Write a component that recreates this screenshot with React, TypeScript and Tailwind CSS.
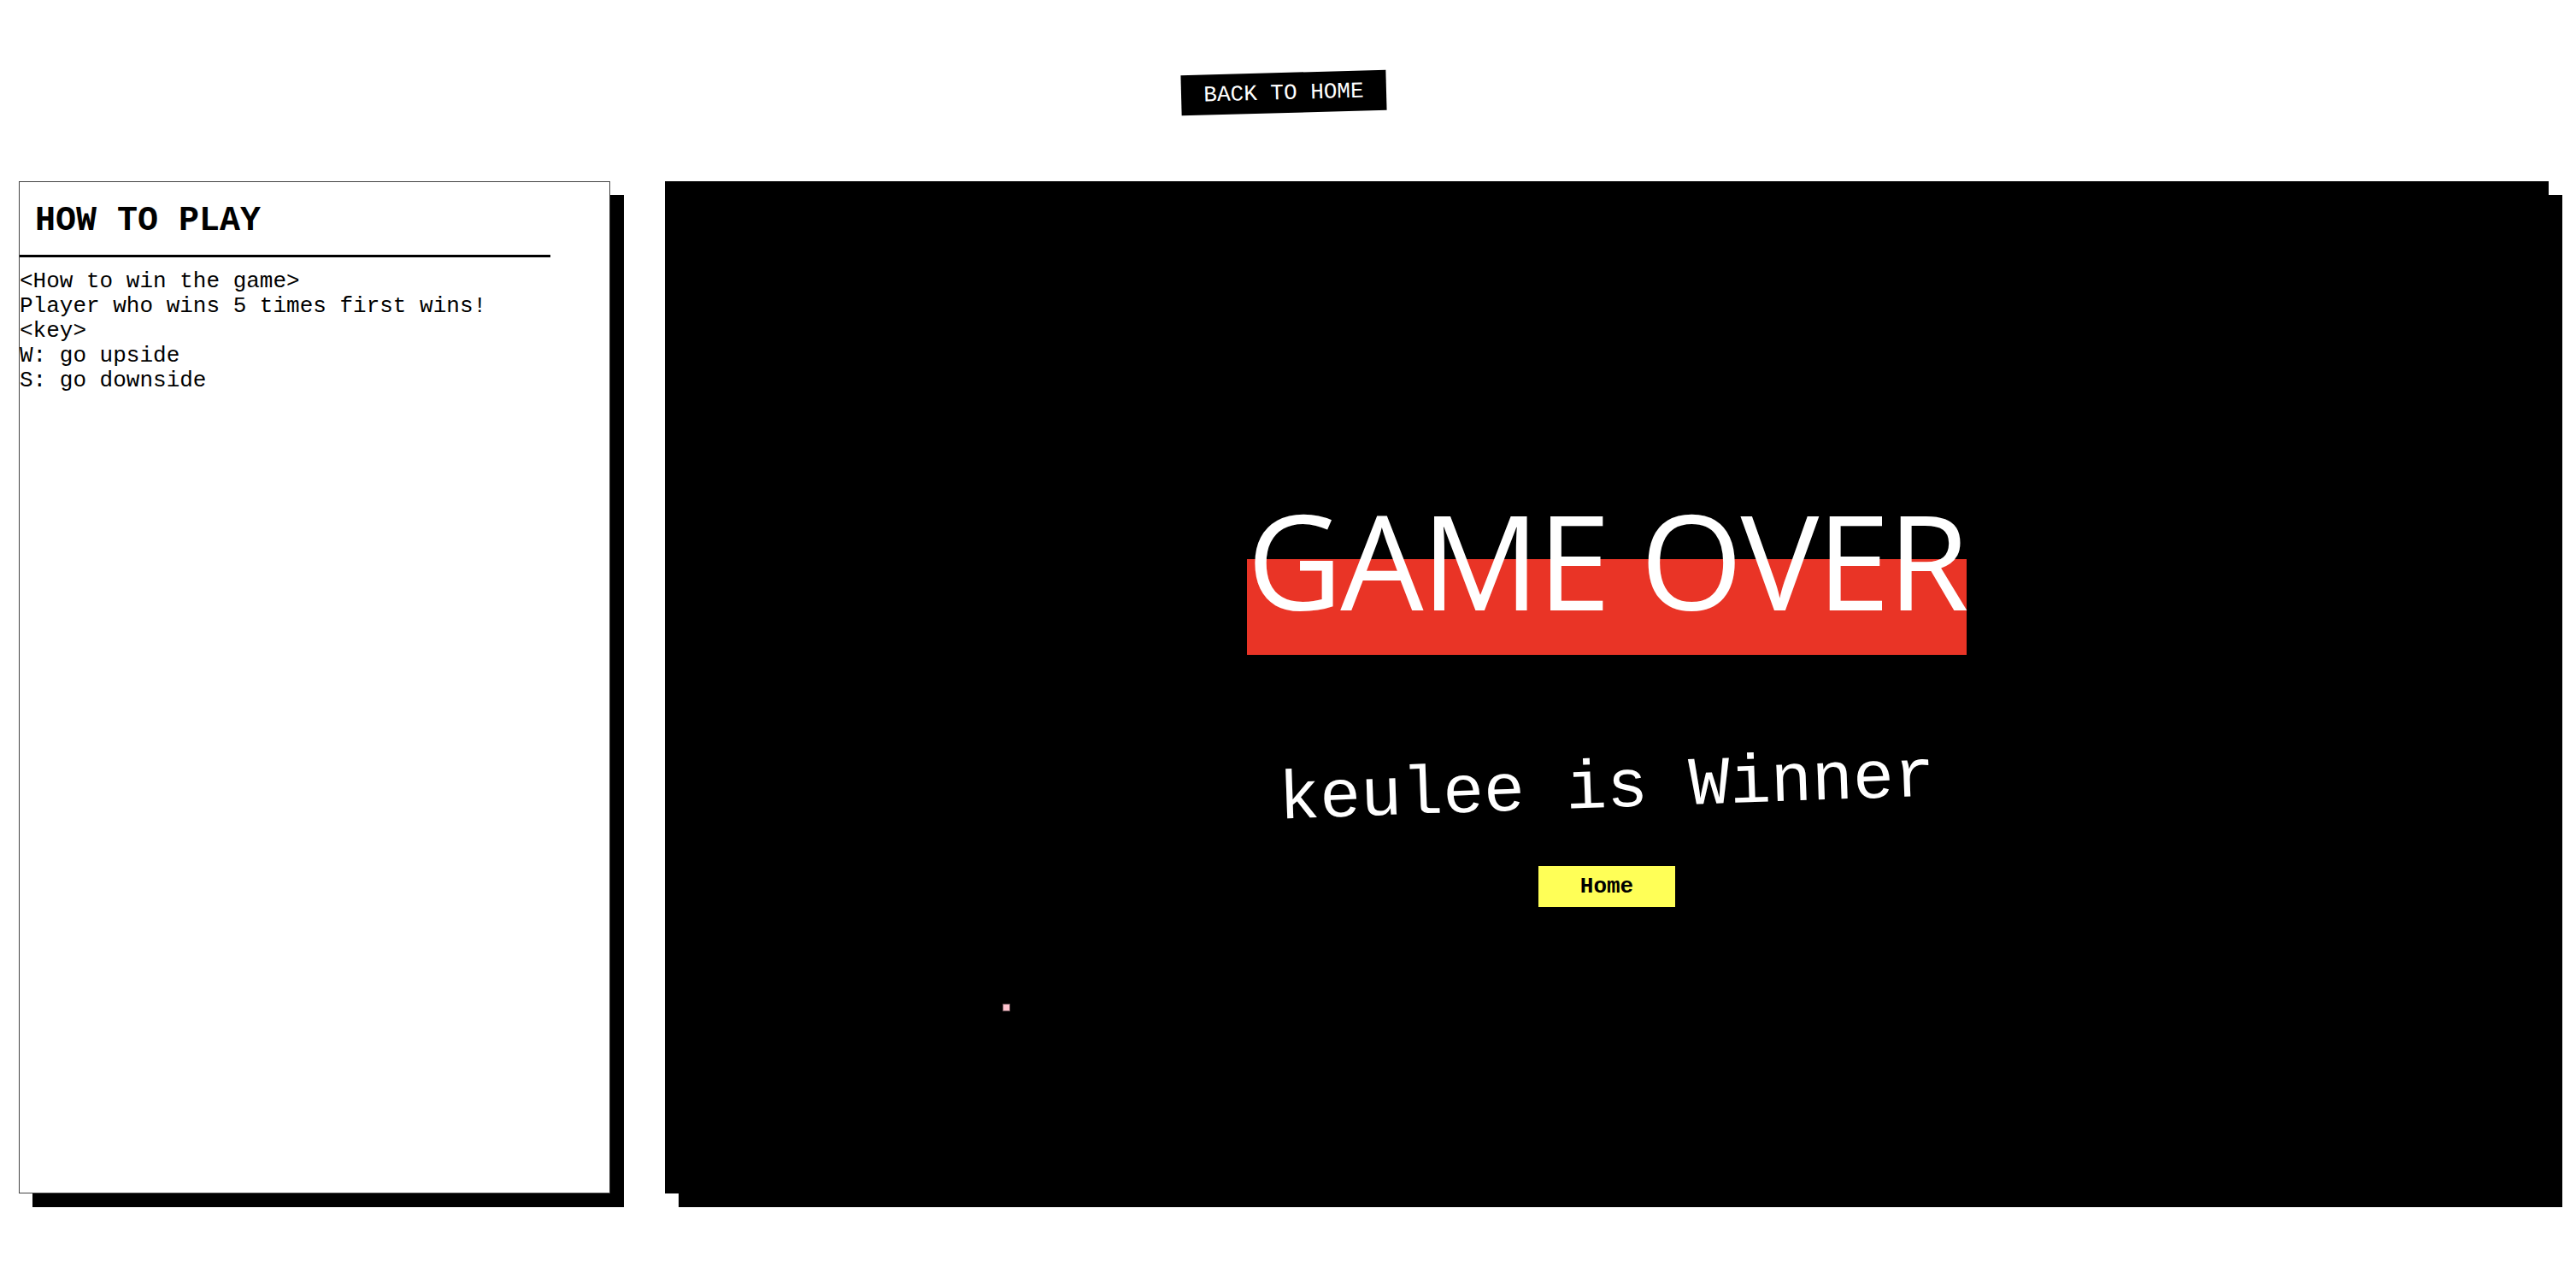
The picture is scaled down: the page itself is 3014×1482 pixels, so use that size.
import React from 'react';

const mono = "font-['Liberation_Mono','Courier_New',monospace]";

function HowToPlay() {
  return (
    <div className="w-[692px] h-[1184px] shrink-0 border border-[#444] bg-white shadow-[16px_16px_0_#000]">
      {/* titulo */}
      <h2 className="w-[90%] pl-[18px] pt-[23px] pb-[17px] border-b-[3px] border-black text-[40px] leading-[45px] font-bold text-black">
        HOW TO PLAY
      </h2>
      <div className="mt-[14px] text-[26px] leading-[29px] text-black whitespace-pre">
        <div>{'<How to win the game>'}</div>
        <div>Player who wins 5 times first wins!</div>
        <div>{'<key>'}</div>
        <div>W: go upside</div>
        <div>S: go downside</div>
      </div>
    </div>
  );
}

function GameBoard() {
  return (
    <div className="relative w-[2204px] h-[1184px] shrink-0 bg-black shadow-[16px_16px_0_#000] flex flex-col items-center justify-center pb-[5px]">
      <div className="inline-block text-[154px] leading-[224px] tracking-[-2.6px] text-white font-['Open_Sans',sans-serif] bg-[linear-gradient(transparent_50%,#e93426_50%)]">
        GAME OVER
      </div>
      <div className="mt-[112px] text-[80px] leading-[90px] text-white -rotate-2 whitespace-pre">
        keulee is Winner
      </div>
      <button className="mt-[45px] w-[160px] h-[48px] bg-[#ffff57] text-[26px] leading-[30px] font-bold text-black">
        Home
      </button>
      {/* pelota */}
      <div className="absolute left-[395px] top-[962px] w-[9px] h-[9px] bg-[#ffc4cf] border border-[#6e5458]" />
    </div>
  );
}

export default function App() {
  return (
    <div className={`min-h-screen w-full bg-white ${mono}`}>
      <div className="flex h-[212px] items-center justify-center pt-[4px]">
        <button className="mr-[10px] w-[240px] h-[47px] bg-black text-white text-[26px] leading-[30px] -rotate-[1.5deg]">
          BACK TO HOME
        </button>
      </div>
      <div className="flex gap-[64px] pl-[22px]">
        <HowToPlay />
        <GameBoard />
      </div>
    </div>
  );
}
